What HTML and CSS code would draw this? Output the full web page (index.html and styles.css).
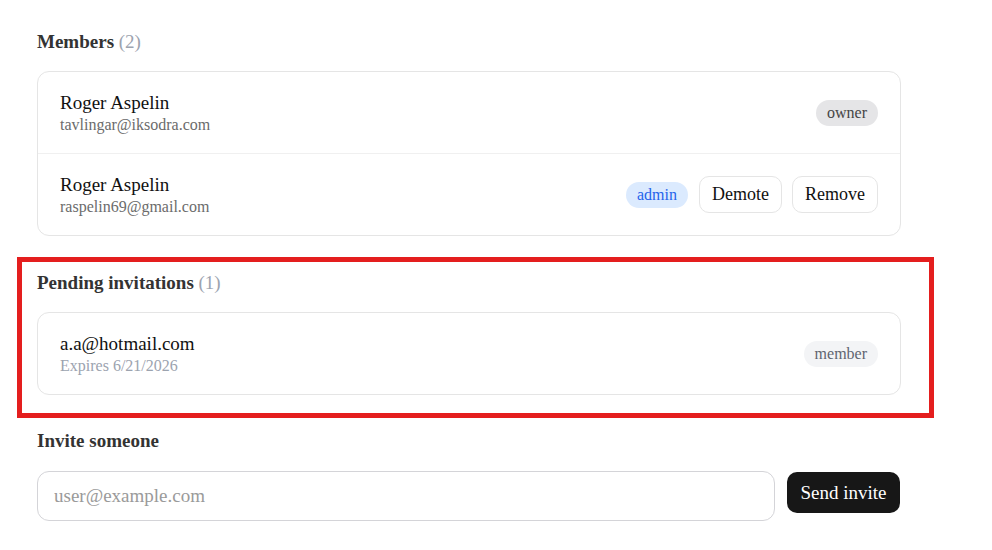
FILE: index.html
```html
<!DOCTYPE html>
<html>
<head>
<meta charset="utf-8">
<link rel="stylesheet" href="styles.css">
</head>
<body>
<div class="page">
  <section class="section">
    <h2 class="heading">Members <span class="count">(2)</span></h2>
    <div class="card">
      <div class="row">
        <div class="who">
          <div class="name">Roger Aspelin</div>
          <div class="sub">tavlingar@iksodra.com</div>
        </div>
        <div class="actions">
          <span class="badge badge-owner">owner</span>
        </div>
      </div>
      <div class="row">
        <div class="who">
          <div class="name">Roger Aspelin</div>
          <div class="sub">raspelin69@gmail.com</div>
        </div>
        <div class="actions">
          <span class="badge badge-admin">admin</span>
          <button class="btn">Demote</button>
          <button class="btn">Remove</button>
        </div>
      </div>
    </div>
  </section>

  <section class="section section-pending">
    <h2 class="heading">Pending invitations <span class="count">(1)</span></h2>
    <div class="card">
      <div class="row">
        <div class="who">
          <div class="name">a.a@hotmail.com</div>
          <div class="sub sub-muted">Expires 6/21/2026</div>
        </div>
        <div class="actions">
          <span class="badge badge-member">member</span>
        </div>
      </div>
    </div>
    <div class="highlight"></div>
  </section>

  <section class="section section-invite">
    <h2 class="heading">Invite someone</h2>
    <form class="invite">
      <input class="input" type="email" placeholder="user@example.com">
      <button class="btn-primary" type="button">Send invite</button>
    </form>
  </section>
</div>
</body>
</html>
```

FILE: styles.css
```css
html, body {
  margin: 0;
  padding: 0;
  background: #ffffff;
}

body {
  font-family: "Liberation Serif", "Times New Roman", serif;
  color: #1a1a1a;
}

.page {
  width: 864px;
  padding: 30px 0 0 37px;
}

.section {
  position: relative;
}

.heading {
  margin: 0;
  font-size: 19px;
  font-weight: bold;
  color: #333333;
  line-height: 24px;
}

.count {
  font-weight: normal;
  color: #9ca3af;
}

.card {
  margin-top: 17px;
  border: 1px solid #e5e5e5;
  border-radius: 12px;
  background: #ffffff;
}

.row {
  display: flex;
  align-items: center;
  justify-content: space-between;
  padding: 0 22px;
  height: 81px;
}

.row + .row {
  border-top: 1px solid #f0f0f0;
}

.who {
  padding-top: 2px;
}

.name {
  font-size: 19px;
  line-height: 23px;
  color: #111111;
}

.sub {
  font-size: 16px;
  line-height: 22px;
  color: #6b6b6b;
}

.sub-muted {
  color: #9ca3af;
}

.actions {
  display: flex;
  align-items: center;
  gap: 10px;
}

.badge {
  display: inline-block;
  height: 26px;
  line-height: 26px;
  padding: 0 11px;
  border-radius: 13px;
  font-size: 16px;
}

.badge-owner {
  background: #e5e5e7;
  color: #444444;
}

.badge-admin {
  background: #dbeafe;
  color: #2563eb;
  margin-right: 1px;
}

.badge-member {
  background: #f3f4f6;
  color: #5f6470;
}

.btn {
  font-family: inherit;
  font-size: 18px;
  color: #111111;
  background: #ffffff;
  border: 1px solid #e5e5e5;
  border-radius: 10px;
  height: 37px;
  padding: 0 12px;
  cursor: pointer;
}

.section-pending {
  margin-top: 35px;
}

/* red outline drawn around the pending block */
.highlight {
  position: absolute;
  left: -20px;
  top: -14px;
  box-sizing: border-box;
  width: 917px;
  height: 161px;
  border: 5px solid #e41e1e;
  pointer-events: none;
}

.section-invite {
  margin-top: 34px;
}

.invite {
  display: flex;
  align-items: flex-start;
  gap: 12px;
  margin: 18px 0 0 0;
}

.input {
  box-sizing: border-box;
  width: 738px;
  height: 50px;
  border: 1px solid #d4d4d8;
  border-radius: 12px;
  padding: 0 16px;
  font-family: inherit;
  font-size: 19px;
  color: #111111;
  outline: none;
}

.input::placeholder {
  color: #9a9a9a;
}

.btn-primary {
  box-sizing: border-box;
  width: 113px;
  height: 41px;
  margin-top: 1px;
  padding: 0;
  background: #171717;
  color: #ffffff;
  border: none;
  border-radius: 10px;
  font-family: inherit;
  font-size: 19px;
  cursor: pointer;
}
```
